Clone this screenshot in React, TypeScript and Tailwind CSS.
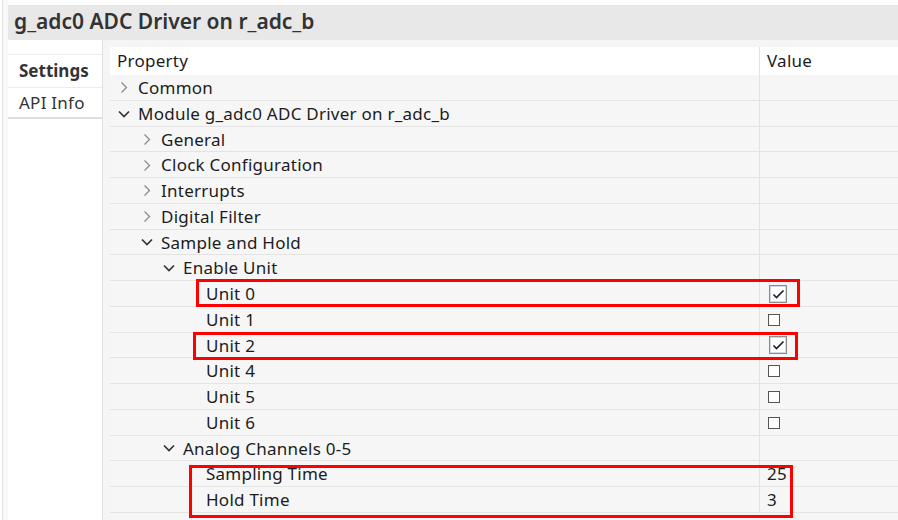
import React from "react";

type Row = {
  label: string;
  level: number;
  kind: "collapsed" | "expanded" | "leaf";
  value?: "checked" | "unchecked" | string;
};

const rows: Row[] = [
  { label: "Common", level: 0, kind: "collapsed" },
  { label: "Module g_adc0 ADC Driver on r_adc_b", level: 0, kind: "expanded" },
  { label: "General", level: 1, kind: "collapsed" },
  { label: "Clock Configuration", level: 1, kind: "collapsed" },
  { label: "Interrupts", level: 1, kind: "collapsed" },
  { label: "Digital Filter", level: 1, kind: "collapsed" },
  { label: "Sample and Hold", level: 1, kind: "expanded" },
  { label: "Enable Unit", level: 2, kind: "expanded" },
  { label: "Unit 0", level: 3, kind: "leaf", value: "checked" },
  { label: "Unit 1", level: 3, kind: "leaf", value: "unchecked" },
  { label: "Unit 2", level: 3, kind: "leaf", value: "checked" },
  { label: "Unit 4", level: 3, kind: "leaf", value: "unchecked" },
  { label: "Unit 5", level: 3, kind: "leaf", value: "unchecked" },
  { label: "Unit 6", level: 3, kind: "leaf", value: "unchecked" },
  { label: "Analog Channels 0-5", level: 2, kind: "expanded" },
  { label: "Sampling Time", level: 3, kind: "leaf", value: "25" },
  { label: "Hold Time", level: 3, kind: "leaf", value: "3" },
];

const indent = ["pl-[8px]", "pl-[31px]", "pl-[53px]", "pl-[76px]"];

function Chevron({ kind }: { kind: Row["kind"] }) {
  if (kind === "collapsed") {
    return (
      <svg width="8" height="13" viewBox="0 0 8 13">
        <polyline points="1.5,1.5 6.5,6.5 1.5,11.5" fill="none" stroke="#8c8c8c" strokeWidth="1.3" />
      </svg>
    );
  }
  if (kind === "expanded") {
    return (
      <svg width="12" height="8" viewBox="0 0 12 8">
        <polyline points="1,1.5 6,6.5 11,1.5" fill="none" stroke="#333" strokeWidth="1.7" />
      </svg>
    );
  }
  return null;
}

function Value({ v }: { v?: string }) {
  if (!v) return null;
  if (v === "checked") {
    return (
      <div className="ml-[2px] flex h-[18px] w-[18px] items-center justify-center border border-[#8a8a8a] bg-white">
        <div className="flex h-[16px] w-[16px] items-center justify-center border border-[#cfd8e3]">
          <svg width="13" height="10" viewBox="0 0 13 10">
            <polyline points="1.5,5.5 4.5,8.5 11.5,1.5" fill="none" stroke="#1b1b2e" strokeWidth="1.6" />
          </svg>
        </div>
      </div>
    );
  }
  if (v === "unchecked") {
    return <div className="ml-[1px] h-[12px] w-[12px] border border-[#555] bg-white" />;
  }
  return <span>{v}</span>;
}

export default function App() {
  return (
    <div
      className="relative flex h-[520px] w-[898px] overflow-hidden bg-white text-[17px] tracking-[0.25px] text-[#1c1c1c]"
      style={{ fontFamily: '"Noto Sans", "Open Sans", sans-serif' }}
    >
      <div className="w-[2px] bg-white" />
      <div className="w-px bg-[#e2e2e2]" />
      <div className="w-[5px] bg-[#f8f8f8]" />
      <div className="flex flex-1 flex-col">
        <div className="h-[5px] bg-white" />
        <div className="flex h-[35px] items-center bg-[#e8e8e8] pb-[3px] pl-[6px] text-[21px] font-semibold leading-none tracking-normal text-[#333]">
          g_adc0 ADC Driver on r_adc_b
        </div>
        <div className="flex flex-1">
          <div className="flex w-[95px] flex-col border-r border-[#e0e0e0] bg-white">
            <div className="h-[14px]" />
            <div className="flex h-[33px] items-center border-t border-[#ececec] pl-[11px] font-bold tracking-normal text-[#333]">
              Settings
            </div>
            <div className="flex h-[30px] items-center border-t border-[#ececec] pl-[11px] text-[#333]">
              API Info
            </div>
            <div className="h-[2px] bg-[#dedede]" />
          </div>
          <div className="flex flex-1 flex-col bg-[#f5f5f5] pl-[7px] pt-[7px]">
            <div className="grid h-[28px] grid-cols-[649px_1fr] bg-white">
              <div className="flex items-center pl-[7px]">Property</div>
              <div className="flex items-center border-l border-[#e2e2e2] pl-[7px]">Value</div>
            </div>
            {rows.map((r, i) => (
              <div key={i} className="grid h-[25.75px] grid-cols-[649px_1fr] border-b border-[#e4e4e4] bg-[#f6f6f6]">
                <div className={`flex items-center ${indent[r.level]}`}>
                  <div className="flex w-[12px] justify-center">
                    <Chevron kind={r.kind} />
                  </div>
                  <span className="ml-[8px] whitespace-nowrap">{r.label}</span>
                </div>
                <div className="flex items-center border-l border-[#e2e2e2] pl-[7px]">
                  <Value v={r.value} />
                </div>
              </div>
            ))}
          </div>
        </div>
      </div>

      <div className="pointer-events-none absolute left-[196px] top-[279px] h-[28px] w-[604px] border-[3px] border-[#ff0000]" />
      <div className="pointer-events-none absolute left-[193px] top-[332px] h-[28px] w-[605px] border-[3px] border-[#ff0000]" />
      <div className="pointer-events-none absolute left-[189px] top-[465px] h-[53px] w-[604px] border-[3px] border-[#ff0000]" />
    </div>
  );
}
